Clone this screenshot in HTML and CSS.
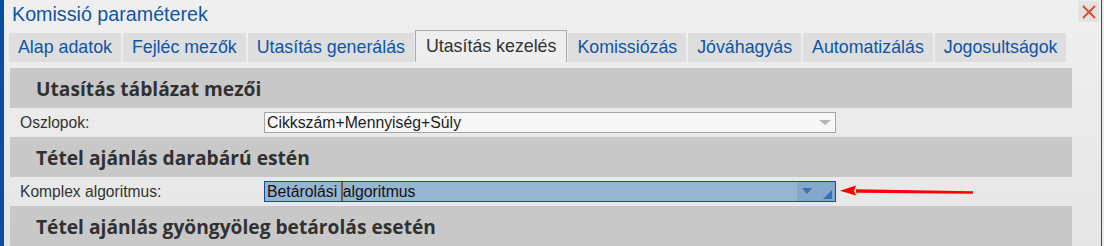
FILE: index.html
```html
<!DOCTYPE html>
<html lang="hu">
<head>
<meta charset="utf-8">
<title>Komissió paraméterek</title>
<link rel="stylesheet" href="styles.css">
</head>
<body>
<div class="window">
  <div class="main">
    <div class="titlebar">
      <div class="title">Komissió paraméterek</div>
      <button class="close" aria-label="Bezár">
        <svg width="14" height="14" viewBox="0 0 14 14"><path d="M1 1L13 13M13 1L1 13" stroke="#d8553a" stroke-width="2.2" fill="none"/></svg>
      </button>
    </div>
    <div class="tabs">
      <div class="tab">Alap adatok</div>
      <div class="tab">Fejléc mezők</div>
      <div class="tab">Utasítás generálás</div>
      <div class="tab active">Utasítás kezelés</div>
      <div class="tab">Komissiózás</div>
      <div class="tab">Jóváhagyás</div>
      <div class="tab">Automatizálás</div>
      <div class="tab">Jogosultságok</div>
    </div>
    <div class="panel">
      <div class="section-head">Utasítás táblázat mezői</div>
      <div class="row">
        <div class="label">Oszlopok:</div>
        <div class="select">
          <span class="value">Cikkszám+Mennyiség+Súly</span>
          <span class="arrow gray"></span>
        </div>
      </div>
      <div class="section-head">Tétel ajánlás darabárú estén</div>
      <div class="row">
        <div class="label">Komplex algoritmus:</div>
        <div class="select focused">
          <span class="value">Betárolási <span class="caret"></span>algoritmus</span>
          <span class="btnzone"><span class="arrow blue"></span><span class="corner"></span></span>
        </div>
        <svg class="pointer" width="140" height="16" viewBox="0 0 140 16">
          <path d="M18 6.2 L135 8.2 L135 10.8 L18 9.8 Z" fill="#ff0000"/>
          <path d="M2 7.8 L18 2.5 L16 7.8 L18 12.5 Z" fill="#ff0000"/>
        </svg>
      </div>
      <div class="section-head">Tétel ajánlás gyöngyöleg betárolás esetén</div>
    </div>
  </div>
  <div class="edge"></div>
</div>
</body>
</html>
```
FILE: styles.css
```css
html, body {
  margin: 0;
  padding: 0;
  width: 1104px;
  height: 246px;
  overflow: hidden;
  background: #e8efe8;
}
.window {
  display: flex;
  height: 246px;
  border-left: 4px solid #0a4ea0;
  box-sizing: border-box;
  font-family: "Liberation Sans", Arial, sans-serif;
}
.main {
  width: 1097px;
  background: linear-gradient(#efefef, #e6e6e6);
  border-right: 1px solid #1a4f92;
}
.edge {
  flex: 1;
  background: #e6efe6;
}
.titlebar {
  height: 30px;
  display: flex;
  align-items: flex-start;
  justify-content: space-between;
}
.title {
  color: #0d55a7;
  font-size: 19.7px;
  padding: 3px 0 0 8px;
  line-height: 22px;
}
.close {
  width: 21px;
  height: 21px;
  margin: 1px 2px 0 0;
  padding: 0;
  border: none;
  background: #e2e2e2;
  display: flex;
  align-items: center;
  justify-content: center;
}
.tabs {
  display: flex;
  align-items: flex-end;
  gap: 2px;
  padding-left: 5px;
  height: 32px;
}
.tab {
  height: 29px;
  box-sizing: border-box;
  padding: 0 9px;
  line-height: 29px;
  background: #dedede;
  color: #0d55a7;
  font-size: 17.8px;
  white-space: nowrap;
}
.tab.active {
  height: 32px;
  line-height: 30px;
  background: #eeeeee;
  border: 1px solid #a9a9a9;
  border-bottom: none;
  color: #333333;
  padding: 0 10px;
  margin: 0 -1px;
}
.panel {
  margin: 6px 0 0 6px;
  width: 1062px;
}
.section-head {
  height: 40px;
  background: #c8c8c8;
  color: #313131;
  font-family: "Open Sans", "DejaVu Sans", sans-serif;
  font-weight: 700;
  font-size: 19.2px;
  line-height: 38px;
  padding: 2px 0 0 26px;
  box-sizing: border-box;
  white-space: nowrap;
}
.row {
  position: relative;
  height: 29px;
  display: flex;
  align-items: center;
}
.label {
  width: 244px;
  padding-left: 10px;
  color: #333333;
  font-size: 15.6px;
}
.select {
  width: 572px;
  height: 21px;
  box-sizing: border-box;
  border: 1px solid #a6a6a6;
  background: #f7f7f7;
  display: flex;
  align-items: center;
  justify-content: space-between;
  font-size: 15.8px;
  color: #1e1e1e;
}
.value {
  padding-left: 2px;
  white-space: nowrap;
  line-height: 19px;
}
.arrow {
  width: 0;
  height: 0;
  border-left: 6px solid transparent;
  border-right: 6px solid transparent;
  border-top: 5px solid #b4b4b4;
  margin-right: 4px;
}
.select.focused {
  border-color: #0f4e9c;
  background: #98b4d3;
  color: #111111;
}
.caret {
  display: inline-block;
  width: 2px;
  height: 19px;
  background: #7b5b3b;
  vertical-align: top;
  margin-left: -1px;
}
.btnzone {
  width: 38px;
  height: 19px;
  background: #86a7cc;
  position: relative;
}
.arrow.blue {
  position: absolute;
  left: 5px;
  top: 6px;
  border-left: 5.5px solid transparent;
  border-right: 5.5px solid transparent;
  border-top: 6px solid #3a70b3;
  margin: 0;
}
.corner {
  position: absolute;
  right: 3px;
  bottom: 2px;
  width: 0;
  height: 0;
  border-left: 9px solid transparent;
  border-bottom: 9px solid #3a70b3;
}
.pointer {
  position: absolute;
  left: 828px;
  top: 6px;
}
```
